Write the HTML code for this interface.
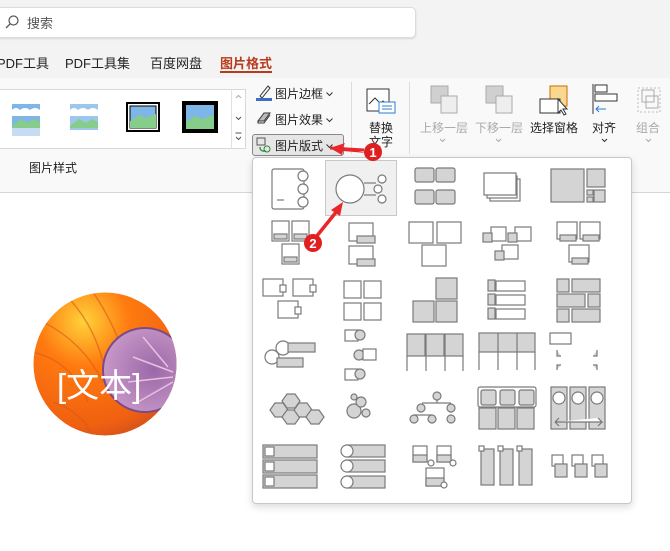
<!DOCTYPE html>
<html><head><meta charset="utf-8"><style>
*{margin:0;padding:0;box-sizing:border-box}
body{width:670px;height:551px;overflow:hidden;background:#fff;font-family:"Liberation Sans","Noto Sans CJK SC",sans-serif;font-size:12px;color:#222;position:relative}
.a{position:absolute}
.t{position:absolute;white-space:nowrap}
.cv{display:inline-block;vertical-align:middle;margin-left:3px}
</style></head><body>
<div class="a" style="left:0;top:0;width:670px;height:78px;background:#f3f3f3"></div>
<div class="a" style="left:-10px;top:7px;width:426px;height:31px;background:#fff;border:1px solid #dcdcdc;border-radius:5px;box-shadow:0 1px 2px rgba(0,0,0,.12)"></div>
<svg class="a" style="left:4px;top:14px" width="16" height="16"><circle cx="9.5" cy="6.5" r="4.5" fill="none" stroke="#555" stroke-width="1.2"/><line x1="6.3" y1="9.7" x2="2" y2="14" stroke="#555" stroke-width="1.3"/></svg>
<div class="t" style="left:27px;top:13px;font-size:13px;color:#555">搜索</div>
<div class="t" style="left:-3px;top:53px;font-size:13px">PDF工具</div>
<div class="t" style="left:65px;top:53px;font-size:13px">PDF工具集</div>
<div class="t" style="left:150px;top:53px;font-size:13px">百度网盘</div>
<div class="t" style="left:220px;top:53px;font-size:13px;color:#b83b1d;font-weight:bold">图片格式</div>
<div class="a" style="left:220px;top:71px;width:52px;height:2px;background:#b83b1d"></div>
<div class="a" style="left:0;top:78px;width:670px;height:115px;background:#f9f9f9;border-bottom:1px solid #d6d6d6"></div>
<div class="a" style="left:-2px;top:89px;width:248px;height:60px;background:#fff;border:1px solid #d8d8d8"></div>
<svg class="a" style="left:0;top:96px" width="230" height="46">
<g transform="translate(12,8)"><rect width="28" height="24" fill="#7fb6e8"/><path d="M0 6 q4-4 8 0 q5-4 10 0 q5-4 10 0 v6 H0z" fill="#fff"/><path d="M0 22 l9-7 7 4 6-4 6 3 v6 H0z" fill="#86cc8a"/><rect y="24" width="28" height="8" fill="#c6dcf2"/></g>
<g transform="translate(70,8)"><rect width="28" height="26" fill="#9cc6ec"/><path d="M0 6 q4-4 8 0 q5-4 10 0 q5-4 10 0 v6 H0z" fill="#fff"/><path d="M0 22 l9-7 7 4 6-4 6 3 v6 H0z" fill="#86cc8a"/></g>
<g transform="translate(128,8)"><rect x="-1" y="-1" width="32" height="28" fill="#fff" stroke="#000" stroke-width="2"/><rect x="2" y="2" width="26" height="22" fill="#7fb6e8" stroke="#000"/><path d="M2 17 l9-6 7 3 10-4 v14 H2z" fill="#86cc8a"/></g>
<g transform="translate(184,7)"><rect x="-2" y="-2" width="36" height="32" fill="#000"/><rect x="2" y="2" width="28" height="24" fill="#7fb6e8"/><path d="M2 19 l9-6 7 3 12-4 v14 H2z" fill="#86cc8a"/></g>
</svg>
<div class="a" style="left:231px;top:89px;width:15px;height:60px;border-left:1px solid #e0e0e0"></div>
<svg class="a" style="left:231px;top:89px" width="15" height="60" fill="none" stroke="#555"><path d="M5 9 l2.5-2.5 2.5 2.5" stroke="#aaa"/><path d="M5 28 l2.5 2.5 2.5-2.5"/><path d="M4.5 44 h6 M5 48 l2.5 2.5 2.5-2.5"/></svg>
<div class="t" style="left:29px;top:159px;font-size:12px">图片样式</div>
<svg class="a" style="left:256px;top:84px" width="16" height="18"><path d="M4 12 L12 2 l2 2 -8 10z" fill="none" stroke="#333"/><rect x="0" y="14" width="16" height="3" fill="#3c6ec8"/></svg>
<div class="t" style="left:275px;top:85px">图片边框<svg class="cv" width="7" height="5"><path d="M.5 .5 l3 3 3-3" fill="none" stroke="#333"/></svg></div>
<svg class="a" style="left:256px;top:111px" width="16" height="14"><path d="M2 10 l6-8 h6 l-6 8z" fill="#bbb" stroke="#333"/><path d="M2 10 v2 h6 l6-8" fill="none" stroke="#333"/></svg>
<div class="t" style="left:275px;top:111px">图片效果<svg class="cv" width="7" height="5"><path d="M.5 .5 l3 3 3-3" fill="none" stroke="#333"/></svg></div>
<div class="a" style="left:252px;top:134px;width:92px;height:22px;background:#e6e6e6;border:1px solid #888;border-radius:3px"></div>
<svg class="a" style="left:256px;top:137px" width="16" height="16"><rect x="1" y="1" width="8" height="7" fill="none" stroke="#555"/><path d="M4 10 q0 5 6 4" fill="none" stroke="#2a8a3a" stroke-width="1.3"/><circle cx="11" cy="12" r="3" fill="none" stroke="#2a8a3a"/></svg>
<div class="t" style="left:275px;top:137px">图片版式<svg class="cv" width="7" height="5"><path d="M.5 .5 l3 3 3-3" fill="none" stroke="#333"/></svg></div>
<div class="a" style="left:351px;top:82px;width:1px;height:72px;background:#ddd"></div>
<svg class="a" style="left:366px;top:88px" width="32" height="30"><rect x="1" y="1" width="22" height="22" fill="#fff" stroke="#333"/><path d="M3 16 l6-6 5 5 3-2 5 4" fill="none" stroke="#333"/><rect x="13" y="14" width="16" height="11" fill="#fff" stroke="#2b7cd3"/><line x1="16" y1="18" x2="26" y2="18" stroke="#2b7cd3"/><line x1="16" y1="21" x2="26" y2="21" stroke="#2b7cd3"/></svg>
<div class="t" style="left:369px;top:119px">替换</div>
<div class="t" style="left:369px;top:133px">文字</div>
<div class="a" style="left:409px;top:82px;width:1px;height:72px;background:#ddd"></div>
<svg class="a" style="left:410px;top:82px" width="260" height="70">
<rect x="21" y="4" width="17" height="17" fill="#d0d0d0" stroke="#aaa"/><rect x="31" y="14" width="16" height="17" fill="#eee" stroke="#aaa"/>
<rect x="76" y="4" width="17" height="17" fill="#d0d0d0" stroke="#aaa"/><rect x="86" y="14" width="16" height="17" fill="#eee" stroke="#aaa"/>
<rect x="140" y="4" width="17" height="20" fill="#f8d890" stroke="#d06a00"/><rect x="130" y="17" width="20" height="14" fill="#fff" stroke="#333"/><path d="M148 17 l0 14 3-3 3 5 2-1 -3-5 4 0z" fill="#fff" stroke="#333"/>
<rect x="185" y="3" width="12" height="7" fill="#fff" stroke="#333"/><rect x="185" y="12" width="22" height="7" fill="#fff" stroke="#333"/><line x1="183" y1="2" x2="183" y2="32" stroke="#333"/><path d="M196 27 h-10 m3-3 l-3 3 3 3" fill="none" stroke="#2b7cd3"/>
<rect x="228" y="6" width="22" height="24" fill="none" stroke="#bbb" stroke-dasharray="2 2"/><rect x="232" y="8" width="12" height="12" fill="none" stroke="#aaa"/><rect x="236" y="14" width="12" height="12" fill="none" stroke="#aaa"/>
<g fill="none" stroke="#aaa"><path d="M30 57 l2.5 2.5 2.5-2.5 M86 57 l2.5 2.5 2.5-2.5 M236 57 l2.5 2.5 2.5-2.5"/><path d="M192 57 l2.5 2.5 2.5-2.5" stroke="#333"/></g>
</svg>
<div class="t" style="left:420px;top:119px;color:#aaa">上移一层</div>
<div class="t" style="left:475px;top:119px;color:#aaa">下移一层</div>
<div class="t" style="left:530px;top:119px">选择窗格</div>
<div class="t" style="left:592px;top:119px">对齐</div>
<div class="t" style="left:636px;top:119px;color:#aaa">组合</div>
<svg class="a" style="left:33px;top:292px" width="145" height="145">
<defs><radialGradient id="o" cx="0.35" cy="0.2" r="0.9"><stop offset="0" stop-color="#ffd23a"/><stop offset="0.35" stop-color="#ff7a10"/><stop offset="0.8" stop-color="#f06010"/><stop offset="1" stop-color="#c84a20"/></radialGradient>
<radialGradient id="p" cx="0.6" cy="0.5" r="0.6"><stop offset="0" stop-color="#9a68a8"/><stop offset="1" stop-color="#c898c8"/></radialGradient>
<clipPath id="c"><circle cx="72" cy="72" r="71.5"/></clipPath></defs>
<g clip-path="url(#c)"><rect width="145" height="145" fill="url(#o)"/>
<path d="M10 30 q40 20 60 60 M0 60 q40 10 55 50 M30 0 q30 30 40 70 M60 0 q20 30 30 60 M20 110 q30 10 40 35" fill="none" stroke="#d85a18" stroke-width="1.5" opacity=".6"/>
<ellipse cx="112" cy="78" rx="42" ry="42" fill="url(#p)" stroke="#7a4a8a" stroke-width="2"/>
<path d="M110 45 l25 30 M100 65 l40 15 M95 90 l45 -5 M105 110 l35-20" stroke="#e8c0e0" stroke-width="1.5"/></g>
</svg>
<div class="t" style="left:57px;top:366px;font-size:33px;color:#fff;line-height:40px">[文本]</div>
<div class="a" style="left:252px;top:157px;width:380px;height:347px;background:#fff;border:1px solid #c8c8c8;border-radius:4px;box-shadow:0 3px 8px rgba(0,0,0,.15)"></div>
<div class="a" style="left:325px;top:160px;width:72px;height:56px;background:#f0f0f0;border:1px solid #c8c8c8"></div>
<svg class="a" style="left:252px;top:157px" width="380" height="347" fill="none" stroke="#7a7a7a" stroke-width="1.2">
<g fill="#d4d4d4">
<rect x="20" y="12" width="32" height="40" fill="#fff" rx="2"/><circle cx="51" cy="19" r="5" fill="#fff"/><circle cx="51" cy="32" r="5" fill="#fff"/><circle cx="51" cy="45" r="5" fill="#fff"/><line x1="25" y1="43" x2="32" y2="43"/>
<circle cx="98" cy="32" r="14" fill="#fff"/><line x1="112" y1="26" x2="124" y2="26"/><line x1="112" y1="38" x2="124" y2="38"/><circle cx="130" cy="22" r="4" fill="#fff"/><circle cx="126" cy="32" r="4" fill="#fff"/><circle cx="130" cy="42" r="4" fill="#fff"/>
<rect x="163" y="11" width="19" height="14" rx="2"/><rect x="184" y="11" width="19" height="14" rx="2"/><rect x="163" y="33" width="19" height="14" rx="2"/><rect x="184" y="33" width="19" height="14" rx="2"/>
<rect x="238" y="22" width="30" height="22" fill="#fff"/><rect x="235" y="19" width="30" height="22" fill="#fff"/><rect x="232" y="16" width="32" height="22" fill="#fff"/>
<rect x="299" y="12" width="33" height="33"/><rect x="335" y="12" width="18" height="18"/><rect x="335" y="33" width="6" height="5"/><rect x="335" y="40" width="6" height="5"/><rect x="342" y="33" width="11" height="12"/>
<rect x="20" y="64" width="17" height="20" fill="#fff"/><rect x="40" y="64" width="17" height="20" fill="#fff"/><rect x="22" y="77" width="13" height="5"/><rect x="42" y="77" width="13" height="5"/><rect x="30" y="87" width="17" height="20" fill="#fff"/><rect x="32" y="100" width="13" height="5"/>
<rect x="97" y="66" width="24" height="18" fill="#fff"/><rect x="105" y="79" width="18" height="7"/><rect x="97" y="89" width="24" height="18" fill="#fff"/><rect x="105" y="102" width="18" height="7"/>
<rect x="157" y="65" width="24" height="21" fill="#fff"/><rect x="185" y="65" width="24" height="21" fill="#fff"/><rect x="170" y="88" width="24" height="21" fill="#fff"/>
<rect x="239" y="70" width="15" height="14" fill="#fff"/><rect x="231" y="76" width="9" height="9"/><rect x="263" y="70" width="16" height="14" fill="#fff"/><rect x="256" y="76" width="9" height="9"/><rect x="250" y="88" width="16" height="14" fill="#fff"/><rect x="243" y="94" width="9" height="9"/>
<rect x="305" y="65" width="20" height="17" fill="#fff"/><rect x="328" y="65" width="20" height="17" fill="#fff"/><rect x="308" y="78" width="16" height="6"/><rect x="331" y="78" width="16" height="6"/><rect x="317" y="88" width="20" height="17" fill="#fff"/><rect x="320" y="101" width="16" height="6"/>
<rect x="11" y="122" width="20" height="17" fill="#fff"/><rect x="41" y="122" width="20" height="17" fill="#fff"/><rect x="26" y="144" width="20" height="17" fill="#fff"/><rect x="28" y="128" width="6" height="7" fill="#fff"/><rect x="58" y="128" width="6" height="7" fill="#fff"/><rect x="43" y="150" width="6" height="7" fill="#fff"/>
<rect x="92" y="124" width="17" height="17" fill="#fff"/><rect x="112" y="124" width="17" height="17" fill="#fff"/><rect x="92" y="146" width="17" height="17" fill="#fff"/><rect x="112" y="146" width="17" height="17" fill="#fff"/>
<rect x="184" y="121" width="21" height="21"/><rect x="161" y="144" width="21" height="21"/><rect x="184" y="144" width="21" height="21"/>
<rect x="244" y="124" width="29" height="10" fill="#fff"/><rect x="244" y="138" width="29" height="10" fill="#fff"/><rect x="244" y="152" width="29" height="10" fill="#fff"/><rect x="236" y="123" width="7" height="11"/><rect x="236" y="137" width="7" height="11"/><rect x="236" y="151" width="7" height="11"/>
<rect x="305" y="122" width="12" height="13"/><rect x="320" y="122" width="28" height="13"/><rect x="305" y="137" width="28" height="13"/><rect x="336" y="137" width="12" height="13"/><rect x="305" y="152" width="12" height="13"/><rect x="320" y="152" width="28" height="13"/>
<circle cx="31" cy="191" r="7" fill="#fff"/><rect x="36" y="186" width="27" height="9"/><circle cx="20" cy="200" r="7" fill="#fff"/><rect x="25" y="201" width="26" height="9"/>
<rect x="93" y="173" width="13" height="11" fill="#fff"/><circle cx="108" cy="178" r="5"/><circle cx="107" cy="198" r="5"/><rect x="111" y="192" width="13" height="11" fill="#fff"/><rect x="93" y="212" width="13" height="11" fill="#fff"/><circle cx="108" cy="217" r="5"/>
<rect x="155" y="177" width="18" height="22"/><rect x="174" y="177" width="18" height="22"/><rect x="193" y="177" width="18" height="22"/><path d="M155 199 v15 M174 199 v15 M193 199 v15 M211 199 v15" />
<rect x="227" y="176" width="56" height="19"/><path d="M246 176 v37 M265 176 v37 M227 195 v18 M283 195 v18"/>
<rect x="298" y="176" width="21" height="11" fill="#fff"/><path d="M305 193 v6 h4 M345 193 v6 h-4 M305 213 v-5 h4 M345 213 v-5 h-4"/>
<g transform="translate(0,13)">
<path d="M18 240 l5-7 h8 l5 7 -5 7 h-8z"/><path d="M30 231 l5-7 h8 l5 7 -5 7 h-8z"/><path d="M30 247 l5-7 h8 l5 7 -5 7 h-8z"/><path d="M42 240 l5-7 h8 l5 7 -5 7 h-8z"/><path d="M54 247 l5-7 h8 l5 7 -5 7 h-8z"/>
<circle cx="102" cy="241" r="7"/><circle cx="109" cy="232" r="5"/><circle cx="114" cy="243" r="4"/><circle cx="102" cy="227" r="3"/>
<circle cx="185" cy="226" r="4"/><circle cx="169" cy="238" r="4"/><circle cx="199" cy="238" r="4"/><circle cx="162" cy="249" r="4"/><circle cx="180" cy="249" r="4"/><circle cx="199" cy="249" r="4"/><path d="M170 233 h29 M185 230 v3 M162 245 h18"/>
<rect x="226" y="217" width="58" height="20" rx="2" fill="#fff"/><rect x="229" y="220" width="15" height="15" rx="2"/><rect x="248" y="220" width="15" height="15" rx="2"/><rect x="267" y="220" width="15" height="15" rx="2"/><rect x="227" y="238" width="17" height="21"/><rect x="246" y="238" width="17" height="21"/><rect x="265" y="238" width="17" height="21"/>
<rect x="299" y="217" width="16" height="42"/><rect x="318" y="217" width="16" height="42"/><rect x="337" y="217" width="16" height="42"/><circle cx="307" cy="228" r="6" fill="#fff"/><circle cx="326" cy="228" r="6" fill="#fff"/><circle cx="345" cy="228" r="6" fill="#fff"/><path d="M303 252 h47 l-4-4 m4 4 l-4 4 M303 252 l4-4 m-4 4 l4 4" stroke="#777" fill="#fff"/>
</g>
<g transform="translate(0,16)">
<rect x="11" y="272" width="54" height="13"/><rect x="11" y="287" width="54" height="13"/><rect x="11" y="302" width="54" height="13"/><rect x="13" y="274" width="9" height="9" fill="#fff"/><rect x="13" y="289" width="9" height="9" fill="#fff"/><rect x="13" y="304" width="9" height="9" fill="#fff"/>
<rect x="95" y="272" width="38" height="12"/><rect x="95" y="287" width="38" height="12"/><rect x="95" y="303" width="38" height="12"/><circle cx="95" cy="278" r="6" fill="#fff"/><circle cx="95" cy="293" r="6" fill="#fff"/><circle cx="95" cy="309" r="6" fill="#fff"/>
<rect x="161" y="273" width="14" height="16" fill="#fff"/><rect x="161" y="282" width="14" height="7"/><rect x="185" y="273" width="14" height="16" fill="#fff"/><rect x="185" y="282" width="14" height="7"/><rect x="174" y="295" width="18" height="18" fill="#fff"/><rect x="174" y="305" width="18" height="8"/><circle cx="179" cy="290" r="3" fill="#fff"/><circle cx="201" cy="290" r="3" fill="#fff"/><circle cx="192" cy="312" r="3" fill="#fff"/>
<rect x="229" y="276" width="13" height="36"/><rect x="248" y="276" width="13" height="36"/><rect x="267" y="276" width="13" height="36"/><rect x="227" y="273" width="5" height="5" fill="#fff"/><rect x="246" y="273" width="5" height="5" fill="#fff"/><rect x="265" y="273" width="5" height="5" fill="#fff"/>
<rect x="300" y="282" width="11" height="11" fill="#fff"/><rect x="303" y="291" width="12" height="13"/><rect x="320" y="282" width="11" height="11" fill="#fff"/><rect x="323" y="291" width="12" height="13"/><rect x="340" y="282" width="11" height="11" fill="#fff"/><rect x="343" y="291" width="12" height="13"/>
</g>
</g>
</svg>
<svg class="a" style="left:0;top:0" width="670" height="551">
<path d="M366 153 L343 147 L345 143 L330 148 L342 155 L343 151 Z" fill="#e8262b"/>
<path d="M330 148 L364 150" stroke="#e8262b" stroke-width="3"/>
<circle cx="373" cy="152" r="9" fill="#e02020"/>
<text x="373" y="157" font-family="Liberation Sans" font-size="13" font-weight="bold" fill="#fff" text-anchor="middle">1</text>
<path d="M316 237 L337 211" stroke="#e8262b" stroke-width="3.5"/>
<path d="M343 202 L331 210 L340 216 Z" fill="#e8262b"/>
<circle cx="313" cy="243" r="9" fill="#e02020"/>
<text x="313" y="248" font-family="Liberation Sans" font-size="13" font-weight="bold" fill="#fff" text-anchor="middle">2</text>
</svg>
</body></html>
